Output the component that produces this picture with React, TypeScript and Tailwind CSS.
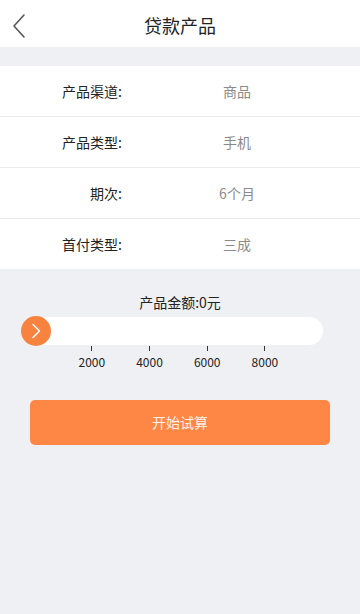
import { useState } from 'react';

const rows = [
  { label: '产品渠道:', value: '商品' },
  { label: '产品类型:', value: '手机' },
  { label: '期次:', value: '6个月' },
  { label: '首付类型:', value: '三成' },
];

const ticks = [2000, 4000, 6000, 8000];

export default function App() {
  const [amount] = useState(0);

  return (
    <div
      className="w-[360px] h-[614px] bg-[#eff0f4] overflow-hidden"
      style={{ fontFamily: '"Noto Sans CJK SC", "Noto Sans", sans-serif' }}
    >
      {/* header */}
      <div className="relative h-[47px] bg-white flex items-center justify-center">
        <button className="absolute left-[10px] top-[11px] p-[2px]">
          <svg width="14" height="26" viewBox="0 0 14 26" fill="none">
            <path d="M12 2 L2 13 L12 24" stroke="#555" strokeWidth="1.6" strokeLinecap="round" strokeLinejoin="round" />
          </svg>
        </button>
        <h1 className="text-[18px] leading-[24px] text-[#222] mt-[2px]">贷款产品</h1>
      </div>

      <div className="h-[19px]" />

      {/* info rows */}
      <div className="flex flex-col gap-px bg-[#e9ebef]">
        {rows.map((r) => (
          <div key={r.label} className="h-[50px] bg-white flex items-center text-[14px]">
            <div className="w-[122px] text-right text-[#222]">{r.label}</div>
            <div className="w-[230px] text-center text-[#8a8a8a]">{r.value}</div>
          </div>
        ))}
      </div>

      {/* amount slider */}
      <div className="pt-[23px] text-center text-[14px] leading-[20px] text-[#222]">
        产品金额:{amount}元
      </div>

      <div className="relative mt-[5px] ml-[22px] w-[301px] h-[28px] rounded-full bg-white">
        <div className="absolute left-[-1px] top-[-1px] w-[30px] h-[30px] rounded-full bg-[#f8833f] flex items-center justify-center">
          <svg width="12" height="16" viewBox="0 0 12 16" fill="none">
            <path d="M3 1.5 L9.5 8 L3 14.5" stroke="#fff" strokeWidth="1.5" strokeLinecap="round" strokeLinejoin="round" />
          </svg>
        </div>
      </div>

      <div className="flex ml-[63px] mt-px">
        {ticks.map((t) => (
          <div key={t} className="w-[57.7px] flex flex-col items-center">
            <div className="w-px h-[5px] bg-[#333]" />
            <div className="mt-[3px] text-[12px] leading-[16px] text-[#222]">{t}</div>
          </div>
        ))}
      </div>

      <div className="mt-[30px] px-[30px]">
        <button className="w-[300px] h-[45px] rounded-[5px] bg-[#fe8745] text-[14px] text-[#fff3e8]">
          开始试算
        </button>
      </div>
    </div>
  );
}
